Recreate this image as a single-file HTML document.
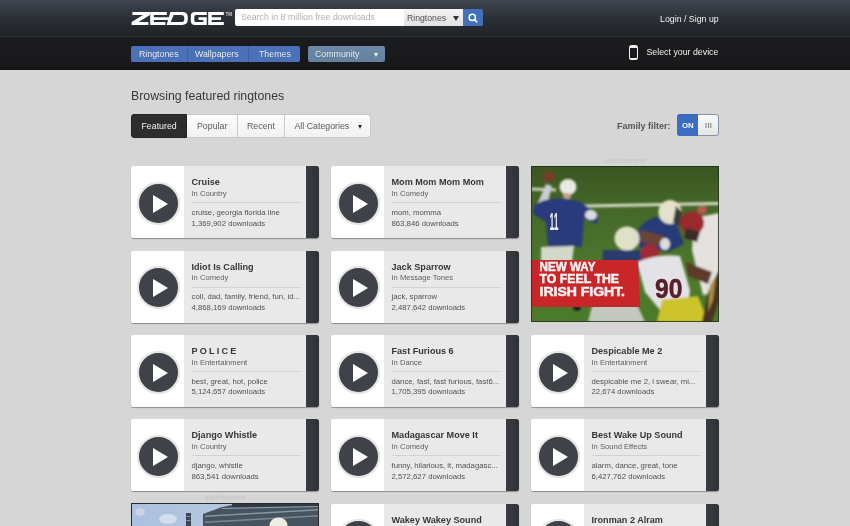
<!DOCTYPE html>
<html><head><meta charset="utf-8">
<style>
*{margin:0;padding:0;box-sizing:border-box}
html,body{width:850px;height:526px;overflow:hidden}
body{background:#d6d6d6;font-family:"Liberation Sans",sans-serif;position:relative;line-height:1}
.abs{position:absolute;white-space:nowrap}
#top{left:0;top:0;width:850px;height:37px;background:linear-gradient(#3e454e,#2b3036 50%,#1f2225)}
#topline{left:0;top:36px;width:850px;height:1px;background:#2c3135}
#nav{left:0;top:37px;width:850px;height:32px;background:linear-gradient(#1b1c1e,#19191b 80%,#141415)}
#navline{left:0;top:69px;width:850px;height:1px;background:#101011}
#search{left:235px;top:9.2px;width:170px;height:16.7px;background:#fff;border-radius:2px 0 0 2px}
#ph{left:241px;top:13.45px;color:#b0b0b0;font-size:8.8px}
#sel{left:404px;top:9.2px;width:59px;height:16.7px;background:linear-gradient(#f3f3f3,#e2e2e2)}
#selt{left:407px;top:13.64px;color:#505050;font-size:8.7px}
#sarr{left:453px;top:15.6px;width:0;height:0;border-left:3px solid transparent;border-right:3px solid transparent;border-top:5px solid #333}
#sbtn{left:463px;top:9.3px;width:20.2px;height:16.6px;background:#4270b9;border-radius:0 1.5px 1.5px 0}
#login{left:660px;top:14.95px;color:#f2f2f2;font-size:8.8px}
.nb{top:45.5px;height:16.6px;background:#4b72b8}
.nbt{top:49.95px;color:#f2f5fb;font-size:8.8px;text-shadow:0 0 1px rgba(10,20,50,.45)}
#device{left:646.5px;top:48.15px;color:#f0f0f0;font-size:8.8px}
#phone{left:628.5px;top:44.8px;width:9.5px;height:15.1px;border:1.7px solid #eee;border-top-width:3.1px;border-bottom-width:2.4px;border-radius:2.5px}
#browse{left:131px;top:89.59px;color:#383838;font-size:12.3px}
.tab{top:114.3px;height:23.3px;background:linear-gradient(#fdfdfd,#f1f1f1);border:1px solid #c9c9c9}
.tabt{top:121.75px;color:#5a5a5a;font-size:8.8px}
#ff{left:617px;top:121.58px;color:#565656;font-size:9px;font-weight:bold}
.card{width:188px;height:72px;background:#e9e9e9;border-radius:2.5px;box-shadow:0 1px 1px rgba(0,0,0,.35);overflow:hidden}
.card .w{position:absolute;left:0;top:0;width:53px;height:72px;background:#fff}
.card .d{position:absolute;right:0;top:0;width:13px;height:72px;background:linear-gradient(90deg,#383b41,#2f3237)}
.card .pb{position:absolute;left:5.5px;top:15.7px;width:43px;height:43px;border-radius:50%;background:#3f4248;border:2.9px solid #e6e6e6;box-shadow:0 0 1px rgba(0,0,0,.12)}
.card .tri{position:absolute;left:22px;top:28.8px;width:0;height:0;border-left:15.4px solid #fff;border-top:9.5px solid transparent;border-bottom:9.5px solid transparent}
.card .t{position:absolute;left:60.5px;top:12.2px;color:#363636;font-size:9.1px;font-weight:bold;white-space:nowrap}
.card .c{position:absolute;left:60.5px;top:23.67px;color:#5e5e5e;font-size:7.6px;white-space:nowrap}
.card .hr{position:absolute;left:60.5px;top:36px;width:109px;height:1px;background:#d2d2d2}
.card .k{position:absolute;left:60.5px;top:42.74px;color:#525252;font-size:7.75px;white-space:nowrap}
.card .n{position:absolute;left:60.5px;top:53.54px;color:#525252;font-size:7.75px;white-space:nowrap}
</style></head><body style="will-change:transform">

<div id="top" class="abs"></div><div id="topline" class="abs"></div>
<div id="nav" class="abs"></div><div id="navline" class="abs"></div>
<div id="search" class="abs"></div><div id="ph" class="abs">Search in 8 million free downloads</div>
<div id="sel" class="abs"></div><div id="selt" class="abs">Ringtones</div><div id="sarr" class="abs"></div>
<div id="sbtn" class="abs"></div>
<svg class="abs" style="left:463px;top:9px" width="20" height="17" viewBox="463 9 20 17"><g stroke="#fff" stroke-width="1.5" fill="none"><circle cx="472.3" cy="17.4" r="3.1"/><path d="M474.5,19.6 L476.9,22" stroke-linecap="round"/></g></svg>
<svg class="abs" style="left:0;top:0" width="240" height="37" viewBox="0 0 240 37">
<g fill="#fff">
<path d="M132.4,12.1 H150 V14.9 L138.6,22 H148.4 V24.9 H131.6 V22 L143,14.9 H132.4 Z"/>
<path d="M150.2,12.1 H166.8 V14.9 H153.8 V17.2 H171.2 V20 H153.8 V22.1 H165.4 V24.9 H150.2 Z"/>
<path fill-rule="evenodd" d="M170.4,12.1 L182,12.1 Q187.8,12.1 187.8,17.2 L187.8,19.8 Q187.8,24.9 182,24.9 L166.6,24.9 Z M173.6,14.9 L181,14.9 Q184.3,14.9 184.3,17.8 L184.3,19.2 Q184.3,22.1 181,22.1 L170.7,22.1 Z"/>
<path d="M195,12.1 L206.8,12.1 L206.8,14.9 L196,14.9 Q194.3,14.9 194.3,16.8 L194.3,20.2 Q194.3,22.1 196,22.1 L203.3,22.1 L203.3,20 L198.5,20 L198.5,17.2 L206.8,17.2 L206.8,24.9 L195,24.9 Q190.8,24.9 190.8,20.7 L190.8,16.3 Q190.8,12.1 195,12.1 Z"/>
<path d="M208.2,12.1 H223.8 V14.9 H211.7 V17.2 H221 V20 H211.7 V22.1 H223.8 V24.9 H208.2 Z"/>
</g>
<text x="225.5" y="15.6" font-family="Liberation Sans" font-size="4.6" font-weight="bold" fill="#ccc">TM</text>
</svg>
<div id="login" class="abs">Login / Sign up</div>
<div class="abs nb" style="left:131px;width:56px;border-radius:2px 0 0 2px"></div>
<div class="abs nb" style="left:187px;width:61px;border-left:1px solid #3d63a3"></div>
<div class="abs nb" style="left:248px;width:52px;border-left:1px solid #3d63a3;border-radius:0 2px 2px 0"></div>
<div class="abs nbt" style="left:139px">Ringtones</div>
<div class="abs nbt" style="left:195px">Wallpapers</div>
<div class="abs nbt" style="left:259px">Themes</div>
<div class="abs nb" style="left:307.5px;width:77.5px;background:linear-gradient(#6c89a6,#6482a0);border-radius:2px"></div>
<div class="abs nbt" style="left:315px">Community</div>
<div class="abs" style="left:374px;top:52.8px;width:0;height:0;border-left:2.7px solid transparent;border-right:2.7px solid transparent;border-top:4.8px solid #f2f4f6"></div>
<div id="phone" class="abs"></div>
<div id="device" class="abs">Select your device</div>
<div id="browse" class="abs">Browsing featured ringtones</div>
<div class="abs tab" style="left:131px;width:56px;background:#2d2d2d;border-color:#232323;border-radius:3px 0 0 3px"></div>
<div class="abs tab" style="left:186.5px;width:51px;border-left:0"></div>
<div class="abs tab" style="left:237px;width:47.5px"></div>
<div class="abs tab" style="left:284px;width:87.3px;border-radius:0 3px 3px 0"></div>
<div class="abs tabt" style="left:141.5px;color:#f4f4f4">Featured</div>
<div class="abs tabt" style="left:197px">Popular</div>
<div class="abs tabt" style="left:247px">Recent</div>
<div class="abs tabt" style="left:294.5px">All Categories</div>
<div class="abs" style="left:357.5px;top:124.5px;width:0;height:0;border-left:2.3px solid transparent;border-right:2.3px solid transparent;border-top:4px solid #333"></div>
<div id="ff" class="abs">Family filter:</div>
<div class="abs" style="left:677px;top:114.2px;width:42px;height:22.2px;border:1px solid #8592a8;border-radius:3px;background:linear-gradient(#fafafa,#e6e6e6)"></div>
<div class="abs" style="left:677px;top:114.2px;width:21px;height:22.2px;background:#3a6cbf;border-radius:3px 0 0 3px"></div>
<div class="abs" style="left:682px;top:122.1px;color:#f4f7fc;font-size:7.8px;font-weight:bold">ON</div>
<div class="abs" style="left:705px;top:122.25px;color:#8a8a8a;font-size:7.5px;font-weight:bold;letter-spacing:0.3px">III</div>

<div class="abs card" style="left:131px;top:166.3px"><div class="w"></div><div class="d"></div><div class="pb"></div><div class="tri"></div><div class="t">Cruise</div><div class="c">In Country</div><div class="hr"></div><div class="k">cruise, georgia florida line</div><div class="n">1,369,902 downloads</div></div><div class="abs card" style="left:331px;top:166.3px"><div class="w"></div><div class="d"></div><div class="pb"></div><div class="tri"></div><div class="t">Mom Mom Mom Mom</div><div class="c">In Comedy</div><div class="hr"></div><div class="k">mom, momma</div><div class="n">863,846 downloads</div></div><div class="abs card" style="left:131px;top:250.6px"><div class="w"></div><div class="d"></div><div class="pb"></div><div class="tri"></div><div class="t">Idiot Is Calling</div><div class="c">In Comedy</div><div class="hr"></div><div class="k">coll, dad, family, friend, fun, id...</div><div class="n">4,868,169 downloads</div></div><div class="abs card" style="left:331px;top:250.6px"><div class="w"></div><div class="d"></div><div class="pb"></div><div class="tri"></div><div class="t">Jack Sparrow</div><div class="c">In Message Tones</div><div class="hr"></div><div class="k">jack, sparrow</div><div class="n">2,487,642 downloads</div></div><div class="abs card" style="left:131px;top:334.9px"><div class="w"></div><div class="d"></div><div class="pb"></div><div class="tri"></div><div class="t"><span style="word-spacing:-0.25px">P O L I C E</span></div><div class="c">In Entertainment</div><div class="hr"></div><div class="k">best, great, hot, police</div><div class="n">5,124,657 downloads</div></div><div class="abs card" style="left:331px;top:334.9px"><div class="w"></div><div class="d"></div><div class="pb"></div><div class="tri"></div><div class="t">Fast Furious 6</div><div class="c">In Dance</div><div class="hr"></div><div class="k">dance, fast, fast furious, fast6...</div><div class="n">1,705,395 downloads</div></div><div class="abs card" style="left:531px;top:334.9px"><div class="w"></div><div class="d"></div><div class="pb"></div><div class="tri"></div><div class="t">Despicable Me 2</div><div class="c">In Entertainment</div><div class="hr"></div><div class="k">despicable me 2, i swear, mi...</div><div class="n">22,674 downloads</div></div><div class="abs card" style="left:131px;top:419.2px"><div class="w"></div><div class="d"></div><div class="pb"></div><div class="tri"></div><div class="t">Django Whistle</div><div class="c">In Country</div><div class="hr"></div><div class="k">django, whistle</div><div class="n">863,541 downloads</div></div><div class="abs card" style="left:331px;top:419.2px"><div class="w"></div><div class="d"></div><div class="pb"></div><div class="tri"></div><div class="t">Madagascar Move It</div><div class="c">In Comedy</div><div class="hr"></div><div class="k">funny, hilarious, it, madagasc...</div><div class="n">2,572,627 downloads</div></div><div class="abs card" style="left:531px;top:419.2px"><div class="w"></div><div class="d"></div><div class="pb"></div><div class="tri"></div><div class="t">Best Wake Up Sound</div><div class="c">In Sound Effects</div><div class="hr"></div><div class="k">alarm, dance, great, tone</div><div class="n">6,427,762 downloads</div></div><div class="abs card" style="left:331px;top:503.5px"><div class="w"></div><div class="d"></div><div class="pb"></div><div class="tri"></div><div class="t">Wakey Wakey Sound</div><div class="c">In Comedy</div><div class="hr"></div><div class="k">wakey, wakey</div><div class="n">1,000,000 downloads</div></div><div class="abs card" style="left:531px;top:503.5px"><div class="w"></div><div class="d"></div><div class="pb"></div><div class="tri"></div><div class="t">Ironman 2 Alram</div><div class="c">In Entertainment</div><div class="hr"></div><div class="k">ironman, alarm</div><div class="n">1,000,000 downloads</div></div>
<div class="abs" style="left:604px;top:158px;color:#c3c3c3;font-size:6.6px">advertisement</div>
<svg class="abs" style="left:531px;top:166px" width="188" height="156" viewBox="531 166 188 156">
<defs>
<linearGradient id="fld" x1="0" y1="0" x2="0" y2="1">
<stop offset="0" stop-color="#3a5520"/><stop offset="0.3" stop-color="#46692a"/><stop offset="0.7" stop-color="#4d7a2c"/><stop offset="1" stop-color="#4a7a2a"/>
</linearGradient>
<filter id="bl" x="-10%" y="-10%" width="120%" height="120%"><feGaussianBlur stdDeviation="1.1"/></filter>
<filter id="bl2"><feGaussianBlur stdDeviation="0.45"/></filter>
</defs>
<rect x="531" y="166" width="188" height="156" fill="url(#fld)"/>
<g filter="url(#bl)">
<path d="M531,187.5 L556,188.5 L556,191.5 L531,190.5 Z" fill="#c8d0b6"/>
<path d="M585,204.5 L719,202 L719,205 L585,207.5 Z" fill="#d5dac4"/>
<!-- QB -->
<path d="M536,207 L546,184 L552,186 L546,210 Z" fill="#c9ccd0"/>
<circle cx="548.5" cy="176.5" r="6" fill="#74402a"/>
<ellipse cx="568" cy="187" rx="8.5" ry="8" fill="#e8e9e4"/>
<ellipse cx="567" cy="196" rx="4" ry="3" fill="#c8a090"/>
<path d="M534,206 Q540,200 552,199 Q570,197 582,203 L598,214 L597,224 L584,219 L582,247 L548,247 L546,222 L533,214 Z" fill="#2a3a7c"/>
<ellipse cx="591" cy="215" rx="6" ry="5" fill="#d8dce0"/>
<path d="M541,247 L574,246 L572,262 L541,263 Z" fill="#d3d8cb"/>
<path d="M551,262 L561,262 L560,282 L550,282 Z" fill="#c8cdc0"/>
<!-- middle blue player -->
<path d="M636,236 Q640,220 660,216 L676,222 L684,244 L668,252 L640,248 Z" fill="#283a78"/>
<ellipse cx="670" cy="212" rx="11.5" ry="12" fill="#e2e2cc"/>
<path d="M676,206 L682,212 L680,226 L673,222 Z" fill="#3a3a34"/>
<path d="M641,230 L664,236 L662,246 L640,242 Z" fill="#6a4434"/>
<ellipse cx="665" cy="244" rx="5" ry="6" fill="#dcdde0"/>
<!-- white helmet lower-left -->
<path d="M603,250 L642,250 L642,272 L602,270 Z" fill="#2a3a6e"/>
<ellipse cx="627" cy="238.5" rx="12.5" ry="12" fill="#dfe0c8"/>
<!-- red helmets -->
<ellipse cx="702" cy="210" rx="5" ry="4" fill="#b85a50"/>
<path d="M694,218 L719,213 L719,292 L703,295 L692,250 Z" fill="#e4e1df"/>
<ellipse cx="692" cy="223" rx="12" ry="11.5" fill="#9a2a2c"/>
<path d="M686,228 L700,232 L697,242 L684,238 Z" fill="#3a2a28"/>
<ellipse cx="650" cy="254" rx="9.5" ry="10" fill="#a22c32"/>
<!-- #90 player -->
<path d="M637,262 Q660,253 680,256 L690,290 L688,308 L660,310 L645,292 Z" fill="#e3e2e6"/>
<path d="M662,300 L698,296 L708,322 L657,322 Z" fill="#cdc32a"/>
<path d="M686,262 L712,272 L708,284 L688,276 Z" fill="#5c3a2a"/>
<path d="M708,292 L719,270 L719,300 L712,322 L702,322 Z" fill="#4a3020"/>
<path d="M710,285 L716,276 L713,300 L708,312 Z" fill="#a89040"/>
<path d="M592,306 L636,302 L645,322 L588,322 Z" fill="#c4c9c0"/>
<ellipse cx="577" cy="308" rx="4" ry="3" fill="#222"/>
</g>
<g filter="url(#bl2)" font-family="Liberation Sans" font-weight="bold">
<text x="549.5" y="230" font-size="23" fill="#eceef4" textLength="9" lengthAdjust="spacingAndGlyphs">11</text>
<text x="655" y="298.5" font-size="36" fill="#5e1c2c" stroke="#3a1018" stroke-width="0.6" textLength="27.5" lengthAdjust="spacingAndGlyphs" transform="translate(655 298.5) scale(1 0.76) translate(-655 -298.5)">90</text>
</g>
<path d="M531,260 L638,260 L640,307 L531,307 Z" fill="#c9252b" filter="url(#bl2)"/>
<g font-family="Liberation Sans" font-weight="bold" fill="#f6f2f2" stroke="#f6f2f2" stroke-width="0.5" filter="url(#bl2)">
<text x="539.5" y="270.8" font-size="12.6" textLength="56" lengthAdjust="spacingAndGlyphs">NEW WAY</text>
<text x="539.5" y="283.2" font-size="12.6" textLength="79.5" lengthAdjust="spacingAndGlyphs">TO FEEL THE</text>
<text x="539.5" y="295.6" font-size="12.6" textLength="85.5" lengthAdjust="spacingAndGlyphs">IRISH FIGHT.</text>
</g>
<rect x="531.5" y="166.5" width="187" height="155" fill="none" stroke="#1e2418" stroke-width="1" opacity="0.7"/>
</svg>

<div class="abs" style="left:204.5px;top:495px;color:#c3c3c3;font-size:6.6px">advertisement</div>
<svg class="abs" style="left:131px;top:503px" width="188" height="23" viewBox="131 503 188 23">
<defs>
<linearGradient id="sky" x1="0" y1="0" x2="1" y2="0">
<stop offset="0" stop-color="#abc1dd"/><stop offset="1" stop-color="#bccde3"/>
</linearGradient>
<filter id="bl3"><feGaussianBlur stdDeviation="0.6"/></filter>
</defs>
<rect x="131" y="503" width="188" height="23" fill="url(#sky)"/>
<g filter="url(#bl3)">
<ellipse cx="168" cy="519" rx="9" ry="5" fill="#d2deec"/>
<ellipse cx="140" cy="512" rx="5" ry="4" fill="#c8d6e8"/>
<path d="M203,526 L203,514 L222,507 L232,505 L319,503.5 L319,526 Z" fill="#46535e"/>
<path d="M232,503.5 L319,503 L319,506 L232,507 Z" fill="#2f3a44"/>
<path d="M205,515.5 L319,509 L319,510.5 L205,517 Z" fill="#8896a2"/>
<path d="M205,521.5 L319,515 L319,516.5 L205,523 Z" fill="#7a8894"/>
<path d="M222,508 L319,506 L319,507 L222,509 Z" fill="#95a2ac"/>
<rect x="186" y="513" width="5" height="13" fill="#3a4652"/>
<rect x="186.5" y="516" width="4" height="1" fill="#8a96a0"/>
<rect x="186.5" y="520" width="4" height="1" fill="#8a96a0"/>
<ellipse cx="278.5" cy="525" rx="9" ry="7.5" fill="#eeece4"/>
</g>
<rect x="131.5" y="503.5" width="187" height="23" fill="none" stroke="#2a2a2a" stroke-width="1"/>
</svg>

</body></html>
